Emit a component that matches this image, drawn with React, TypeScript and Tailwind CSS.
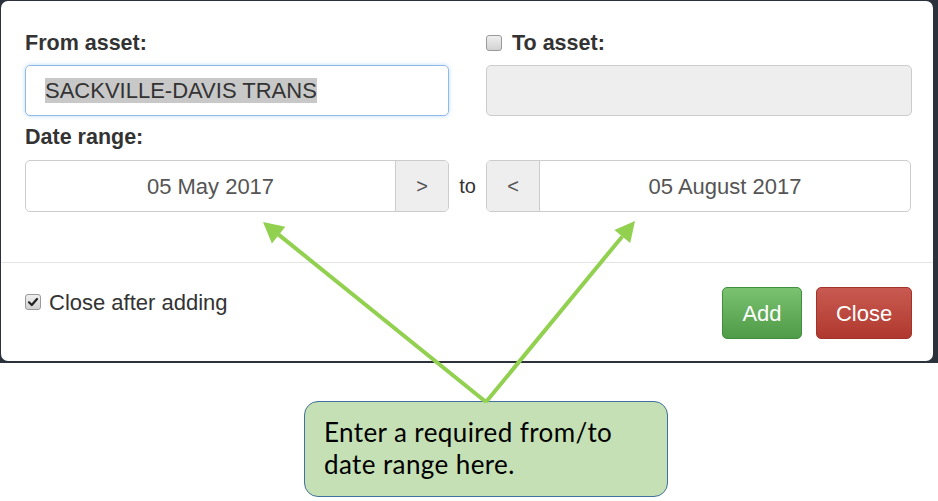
import type { ReactNode } from 'react'

const UI_FONT = { fontFamily: '"Liberation Sans", Arial, sans-serif' }

function Box({ checked }: { checked?: boolean }) {
  return (
    <span className="inline-flex items-center justify-center w-[16px] h-[16px] rounded-[3px] border border-[#9a9a9a] bg-gradient-to-b from-[#efefef] to-[#d2d2d2]">
      {checked && (
        <svg width="12" height="12" viewBox="0 0 12 12">
          <path d="M2 6.3 L4.8 9 L10 3" fill="none" stroke="#222" strokeWidth="2.2" strokeLinecap="round" strokeLinejoin="round" />
        </svg>
      )}
    </span>
  )
}

function Label({ children }: { children: ReactNode }) {
  return <div className="h-[30px] leading-[30px] text-[21.5px] font-bold text-[#333]">{children}</div>
}

function Addon({ children, side }: { children: ReactNode; side: 'l' | 'r' }) {
  return (
    <div
      className={`w-[53px] flex items-center justify-center bg-[#eeeeee] text-[#555] text-[20px] ${
        side === 'r' ? 'border-l border-[#cccccc]' : 'border-r border-[#cccccc]'
      }`}
    >
      {children}
    </div>
  )
}

export default function App() {
  return (
    <div className="relative w-[938px] h-[501px] bg-white overflow-hidden" style={UI_FONT}>
      <div className="h-[363px] bg-[#2b323b] pt-[1px] pl-[1px] pr-[5px] pb-[2px]">
        <div className="h-full bg-white rounded-[7px] flex flex-col">
          <div className="pt-[27px] pl-[24px] pr-[21px] h-[262px] border-b border-[#e5e5e5]">
            <div className="grid grid-cols-[424px_426px] gap-x-[37px]">
              <Label>From asset:</Label>
              <div className="flex items-center gap-[10px] h-[30px]">
                <Box />
                <Label>To asset:</Label>
              </div>
              <div className="mt-[7px] h-[51px] rounded-[5px] border border-[#8fb9e6] shadow-[0_0_4px_rgba(102,175,233,0.45)] flex items-center pl-[19px]">
                <span className="bg-[#c8c8c8] text-[#333] text-[22px] leading-[25px]">SACKVILLE-DAVIS TRANS</span>
              </div>
              <div className="mt-[7px] h-[51px] rounded-[5px] border border-[#cccccc] bg-[#eeeeee]" />
            </div>
            <div className="mt-[6px]">
              <Label>Date range:</Label>
            </div>
            <div className="mt-[8px] flex items-stretch h-[52px]">
              <div className="w-[424px] flex rounded-[5px] border border-[#cccccc] overflow-hidden">
                <div className="flex-1 flex items-center justify-center text-[22px] text-[#555]">05 May 2017</div>
                <Addon side="r">&gt;</Addon>
              </div>
              <div className="w-[37px] flex items-center justify-center text-[20px] text-[#333]">to</div>
              <div className="w-[425px] flex rounded-[5px] border border-[#cccccc] overflow-hidden">
                <Addon side="l">&lt;</Addon>
                <div className="flex-1 flex items-center justify-center text-[22px] text-[#555]">05 August 2017</div>
              </div>
            </div>
          </div>
          <div className="flex justify-between pt-[24px] pl-[24px] pr-[21px]">
            <div className="flex items-center gap-[8px] h-[30px] text-[22px] text-[#333]">
              <Box checked />
              <span>Close after adding</span>
            </div>
            <div className="flex gap-[14px]">
              <button className="w-[80px] h-[52px] rounded-[5px] border border-[#3e8f3e] bg-gradient-to-b from-[#7ac270] to-[#4f9b47] text-white text-[22px]">
                Add
              </button>
              <button className="w-[96px] h-[52px] rounded-[5px] border border-[#a2332a] bg-gradient-to-b from-[#c95a51] to-[#b0382e] text-white text-[22px]">
                Close
              </button>
            </div>
          </div>
        </div>
      </div>

      <div className="absolute left-[304px] top-[401px] w-[364px] h-[96px] rounded-[14px] border border-[#41719c] bg-[#c5e0b4] pl-[19px] pt-[14px] text-[26px] leading-[32px] tracking-[0.4px] text-black" style={{ fontFamily: 'Lato, "Open Sans", sans-serif' }}>
        Enter a required from/to
        <br />
        date range here.
      </div>

      <svg className="absolute left-0 top-0 pointer-events-none" width="938" height="501" viewBox="0 0 938 501">
        <g stroke="#92d050" strokeWidth="4" fill="#92d050">
          <line x1="486" y1="402" x2="278.6" y2="234.6" />
          <line x1="486" y1="402" x2="622.3" y2="236.4" />
        </g>
        <polygon points="263,222 285.3,226.8 271.9,243.4" fill="#92d050" />
        <polygon points="635,221 630.2,243 614.4,229.9" fill="#92d050" />
      </svg>
    </div>
  )
}
